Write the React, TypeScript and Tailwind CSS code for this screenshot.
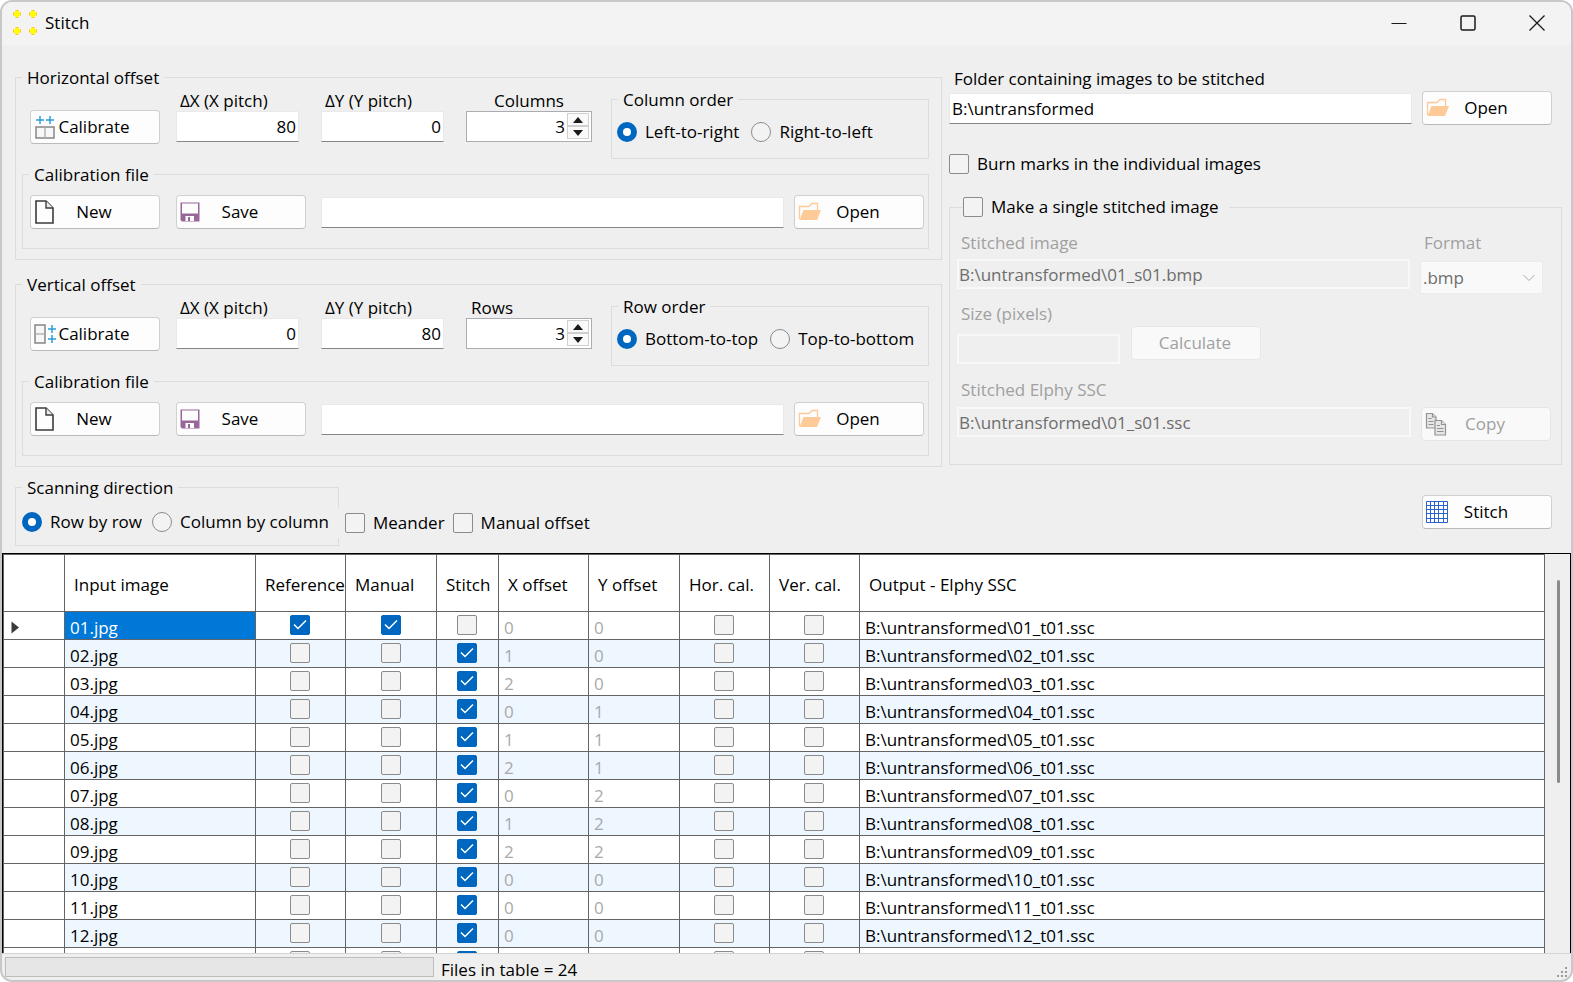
import { useState, type ReactNode } from "react";

type Axis = "horizontal" | "vertical";

interface ImageRow {
  name: string;
  reference: boolean;
  manual: boolean;
  stitch: boolean;
  x: number;
  y: number;
  output: string;
}

const offsets = [
  [0, 0],
  [1, 0],
  [2, 0],
  [0, 1],
  [1, 1],
  [2, 1],
  [0, 2],
  [1, 2],
  [2, 2],
];

const initialRows: ImageRow[] = Array.from({ length: 24 }, (_, i) => {
  const id = String(i + 1).padStart(2, "0");
  const [x, y] = offsets[i] ?? [0, 0];
  return {
    name: `${id}.jpg`,
    reference: i === 0,
    manual: i === 0,
    stitch: i !== 0,
    x,
    y,
    output: `B:\\untransformed\\${id}_t01.ssc`,
  };
});

// full rows that fit in the grid; the one after them is only peeking in
const PAGE_SIZE = 12;

const headers = [
  "",
  "Input image",
  "Reference",
  "Manual",
  "Stitch",
  "X offset",
  "Y offset",
  "Hor. cal.",
  "Ver. cal.",
  "Output - Elphy SSC",
];

/* ---------- icons ---------- */

function AppIcon() {
  return (
    <svg width="26" height="26" viewBox="0 0 26 26" aria-hidden="true">
      {[
        [5, 4],
        [21, 4],
        [5, 21],
        [21, 21],
      ].map(([x, y]) => (
        <g key={`${x}-${y}`}>
          <path d={`M${x - 4} ${y}h8M${x} ${y - 4}v8`} stroke="#ffc61a" strokeWidth="3" />
          <path d={`M${x - 3} ${y}h6M${x} ${y - 3}v6`} stroke="#ffff00" strokeWidth="3" />
        </g>
      ))}
    </svg>
  );
}

function CalibrateIcon({ axis }: { axis: Axis }) {
  if (axis === "horizontal") {
    return (
      <svg width="24" height="26" viewBox="0 0 24 26" fill="none" aria-hidden="true">
        <path d="M2 6h8M6 2v8M12 6h8M16 2v8" stroke="#2a9fd8" strokeWidth="1.5" />
        <rect x="2" y="13" width="18" height="11" fill="#f7f7f7" stroke="#868686" strokeWidth="1.5" />
        <path d="M11 13.5v10" stroke="#b5b5b5" strokeWidth="1.5" />
      </svg>
    );
  }
  return (
    <svg width="24" height="26" viewBox="0 0 24 26" fill="none" aria-hidden="true">
      <rect x="1" y="4" width="10" height="18" fill="#f7f7f7" stroke="#868686" strokeWidth="1.5" />
      <path d="M1.5 13h9" stroke="#b5b5b5" strokeWidth="1.5" />
      <path d="M14 8h8M18 4v8M14 18h8M18 14v8" stroke="#2a9fd8" strokeWidth="1.5" />
    </svg>
  );
}

function NewIcon() {
  return (
    <svg width="22" height="26" viewBox="0 0 22 26" fill="none" aria-hidden="true">
      <path d="M2 2h10l7 7v15H2z" fill="#fdfdfd" stroke="#3b3b3b" strokeWidth="1.6" />
      <path d="M12 2v7h7" fill="#ededed" stroke="#3b3b3b" strokeWidth="1.4" />
    </svg>
  );
}

function SaveIcon() {
  return (
    <svg width="20" height="20" viewBox="0 0 20 20" aria-hidden="true">
      <path d="M.5.5h19v19H2L.5 18z" fill="#996699" />
      <path d="M2 1.500h16v10H2z" fill="#fdfdfd" />
      <path d="M5.500 14h8.500v5H5.500z" fill="#fdfdfd" />
      <path d="M8 15h2v4H8z" fill="#996699" />
    </svg>
  );
}

function FolderIcon() {
  return (
    <svg width="24" height="20" viewBox="0 0 24 20" fill="none" aria-hidden="true">
      <path d="M1.5 17V4.500h9.500l3-3h5.500V8" stroke="#fecb98" strokeWidth="1.3" />
      <path d="M5.500 8h17.500l-4 10H1.500z" fill="#fecb98" />
    </svg>
  );
}

function CopyIcon() {
  return (
    <svg width="22" height="24" viewBox="0 0 22 24" fill="#e6e6e6" stroke="#929292" strokeWidth="1.2" aria-hidden="true">
      <path d="M1.5 1.5h6l3.500 3.500v11H1.500z" />
      <path d="M7.500 1.500V5H11M3.500 6.500h3M3.500 9.500h5M3.500 12.500h5" />
      <path d="M10 8.500h6.500l4 4V23H10z" />
      <path d="M16.500 8.500v4h4M12 13.500h3M12 16.500h6.500M12 19.500h6.500" />
    </svg>
  );
}

function GridIcon() {
  return (
    <svg width="22" height="22" viewBox="0 0 22 22" fill="#ffffff" stroke="#2b62cf" aria-hidden="true">
      <path d="M.5.5h21v21H.500zM4.500.500v21M8.500.500v21M12.500.500v21M17.500.500v21M.500 4.500h21M.500 8.500h21M.500 12.500h21M.500 17.500h21" />
    </svg>
  );
}

/* ---------- controls ---------- */

function Button({
  icon,
  children,
  disabled,
}: {
  icon?: ReactNode;
  children: ReactNode;
  disabled?: boolean;
}) {
  return (
    <button
      type="button"
      disabled={disabled}
      className="grid h-[34px] w-[130px] shrink-0 grid-cols-[1fr_auto_1fr] items-center rounded border border-[#d0d0d0] border-b-[#bababa] bg-[#fdfdfd] pr-[5px] pl-[3px] hover:bg-[#f5faff] disabled:border-[#e6e6e6] disabled:bg-[#f9f9f9] disabled:text-[#a0a0a0]"
    >
      <span className="flex items-center">{icon}</span>
      <span>{children}</span>
    </button>
  );
}

function CheckBox({
  checked,
  onChange,
  id,
  label,
}: {
  checked: boolean;
  onChange: (value: boolean) => void;
  id?: string;
  label?: string;
}) {
  return (
    <span className="inline-grid size-5 shrink-0 align-top">
      <input
        id={id}
        type="checkbox"
        aria-label={label}
        checked={checked}
        onChange={(e) => onChange(e.target.checked)}
        className="col-start-1 row-start-1 size-5 appearance-none rounded-[2px] border border-[#8b8b8b] bg-[#f3f3f3] checked:border-[#0067c0] checked:bg-[#0067c0]"
      />
      {checked && (
        <svg
          viewBox="0 0 20 20"
          fill="none"
          className="pointer-events-none col-start-1 row-start-1 size-5"
          aria-hidden="true"
        >
          <path d="M4 9.500l4 4 8-8" stroke="#ffffff" strokeWidth="1.500" />
        </svg>
      )}
    </span>
  );
}

function LabelledCheck({
  id,
  children,
  className = "",
}: {
  id: string;
  children: ReactNode;
  className?: string;
}) {
  const [checked, setChecked] = useState(false);
  return (
    <label htmlFor={id} className={`flex items-center gap-2 whitespace-nowrap ${className}`}>
      <CheckBox id={id} checked={checked} onChange={setChecked} />
      <span>{children}</span>
    </label>
  );
}

function Radio({ name, children, defaultChecked }: { name: string; children: ReactNode; defaultChecked?: boolean }) {
  return (
    <label className="flex items-center gap-2 whitespace-nowrap">
      <input
        type="radio"
        name={name}
        defaultChecked={defaultChecked}
        className="size-5 shrink-0 appearance-none rounded-full border border-[#8b8b8b] bg-[#f3f3f3] checked:border-[6px] checked:border-[#0067c0] checked:bg-white"
      />
      <span>{children}</span>
    </label>
  );
}

function Group({ title, className = "", children }: { title: ReactNode; className?: string; children: ReactNode }) {
  return (
    <fieldset className={`min-w-0 border border-[#dcdcdc] ${className}`}>
      <legend className="ml-1.5 h-5 px-[5px] leading-[22px]">{title}</legend>
      {children}
    </fieldset>
  );
}

function NumberField({ id, label, value }: { id: string; label: string; value: string }) {
  return (
    <div className="flex flex-col pt-0.5">
      <label htmlFor={id} className="pl-1 leading-5 whitespace-nowrap">
        {label}
      </label>
      <input
        id={id}
        type="text"
        defaultValue={value}
        className="h-[31px] w-[123px] border border-[#e9e9e9] border-b-[#868686] bg-white px-0.5 text-right outline-none"
      />
    </div>
  );
}

function Spinner({ id, label, indent }: { id: string; label: string; indent: string }) {
  const [value, setValue] = useState(3);
  return (
    <div className="flex flex-col pt-0.5">
      <label htmlFor={id} className={`leading-5 ${indent}`}>
        {label}
      </label>
      <div className="flex h-[31px] w-[126px] border border-[#abadb3] bg-white">
        <input
          id={id}
          type="text"
          value={value}
          onChange={(e) => setValue(Number(e.target.value) || 0)}
          className="min-w-0 flex-1 px-0.5 text-right outline-none"
        />
        <div className="flex w-6 flex-col pt-px pr-0.5 pb-0.5">
          <button
            type="button"
            aria-label={`Increase ${label}`}
            onClick={() => setValue(value + 1)}
            className="flex flex-1 items-center justify-center border border-[#d0d0d0] bg-[#fafafa]"
          >
            <svg width="10" height="6" viewBox="0 0 10 6" aria-hidden="true">
              <path d="M5 0l5 6H0z" fill="#1a1a1a" />
            </svg>
          </button>
          <button
            type="button"
            aria-label={`Decrease ${label}`}
            onClick={() => setValue(value - 1)}
            className="flex flex-1 items-center justify-center border border-[#d0d0d0] bg-[#fafafa]"
          >
            <svg width="10" height="6" viewBox="0 0 10 6" aria-hidden="true">
              <path d="M0 0h10L5 6z" fill="#1a1a1a" />
            </svg>
          </button>
        </div>
      </div>
    </div>
  );
}

interface OffsetGroupProps {
  axis: Axis;
  title: string;
  dx: string;
  dy: string;
  countLabel: string;
  countIndent: string;
  orderTitle: string;
  orders: [string, string];
}

function OffsetGroup({ axis, title, dx, dy, countLabel, countIndent, orderTitle, orders }: OffsetGroupProps) {
  return (
    <Group title={title}>
      <div className="pr-3 pb-[10px] pl-1.5">
        <div className="grid grid-cols-[130px_129px_129px_129px_1fr] gap-x-4 pt-0.5 pl-2">
          <div className="pt-[21px]">
            <Button icon={<CalibrateIcon axis={axis} />}>Calibrate</Button>
          </div>
          <NumberField id={`${axis}-dx`} label="ΔX (X pitch)" value={dx} />
          <NumberField id={`${axis}-dy`} label="ΔY (Y pitch)" value={dy} />
          <Spinner id={`${axis}-count`} label={countLabel} indent={countIndent} />
          <Group title={orderTitle} className="h-[70px]">
            <div className="flex gap-3 pt-[11px] pl-[5px]">
              <Radio name={`${axis}-order`} defaultChecked>
                {orders[0]}
              </Radio>
              <Radio name={`${axis}-order`}>{orders[1]}</Radio>
            </div>
          </Group>
        </div>
        <Group title="Calibration file" className="mt-[5px]">
          <div className="grid grid-cols-[130px_129px_1fr] gap-x-4 pt-[11px] pr-1 pb-[19px] pl-[7px]">
            <Button icon={<NewIcon />}>New</Button>
            <Button icon={<SaveIcon />}>Save</Button>
            <div className="flex items-center gap-2.5">
              <input
                type="text"
                aria-label={`${title} calibration file`}
                className="h-[31px] min-w-0 flex-1 border border-[#e9e9e9] border-b-[#868686] bg-white px-1 outline-none"
              />
              <Button icon={<FolderIcon />}>Open</Button>
            </div>
          </div>
        </Group>
      </div>
    </Group>
  );
}

function TitleBar() {
  return (
    <header className="flex h-[43px] shrink-0 items-center bg-[#f3f3f3] pb-0.5 pl-2.5">
      <AppIcon />
      <h1 className="pl-[7px]">Stitch</h1>
      <div className="ml-auto flex h-full">
        <button type="button" aria-label="Minimize" className="flex w-[69px] items-center justify-center">
          <svg width="16" height="16" viewBox="0 0 16 16" fill="none" stroke="#1a1a1a" aria-hidden="true">
            <path d="M.5 8.500h15" />
          </svg>
        </button>
        <button type="button" aria-label="Maximize" className="flex w-[69px] items-center justify-center">
          <svg width="16" height="16" viewBox="0 0 16 16" fill="none" stroke="#1a1a1a" strokeWidth="1.500" aria-hidden="true">
            <rect x="1" y="1" width="14" height="14" rx="1.500" />
          </svg>
        </button>
        <button type="button" aria-label="Close" className="flex w-[69px] items-center justify-center">
          <svg width="16" height="16" viewBox="0 0 16 16" fill="none" stroke="#1a1a1a" strokeWidth="1.300" aria-hidden="true">
            <path d="M.5.5l15 15M15.500.500l-15 15" />
          </svg>
        </button>
      </div>
    </header>
  );
}

function ScanControls() {
  return (
    <div className="mt-2.5 flex items-start">
      <Group title="Scanning direction" className="h-[69px] w-[324px]">
        <div className="flex gap-2.5 pt-[13px] pl-1.5">
          <Radio name="scan" defaultChecked>
            Row by row
          </Radio>
          <Radio name="scan">Column by column</Radio>
        </div>
      </Group>
      {/* the labels are opaque and sit over the group's right edge */}
      <div className="relative mt-[31px] -ml-px flex gap-2 bg-[#efefef]">
        <LabelledCheck id="meander" className="h-[30px] pl-[7px]">
          Meander
        </LabelledCheck>
        <LabelledCheck id="manual-offset">Manual offset</LabelledCheck>
      </div>
    </div>
  );
}

const disabledInput = "border-2 border-[#f8f8f8] bg-[#efefef] text-[#6d6d6d] outline-none";

function OutputPanel() {
  const [single, setSingle] = useState(false);
  return (
    <div className="flex w-[613px] shrink-0 flex-col">
      <label htmlFor="folder" className="pt-0.5 pl-[5px] leading-5">
        Folder containing images to be stitched
      </label>
      <div className="flex items-center gap-2.5 pt-0.5 pr-2.5">
        <input
          id="folder"
          type="text"
          defaultValue="B:\untransformed"
          className="h-[31px] min-w-0 flex-1 border border-[#e9e9e9] border-b-[#868686] bg-white px-0.5 outline-none"
        />
        <Button icon={<FolderIcon />}>Open</Button>
      </div>
      <LabelledCheck id="burn" className="mt-[27px]">
        Burn marks in the individual images
      </LabelledCheck>
      <fieldset className="mt-[21px] h-[268px] min-w-0 border border-[#dcdcdc]">
        <legend className="ml-[13px] flex h-5 items-center gap-2 pr-2.5 leading-5">
          <CheckBox id="single" checked={single} onChange={setSingle} />
          <label htmlFor="single">Make a single stitched image</label>
        </legend>
        <div className="pr-2.5 pl-[7px]">
          <div className="grid grid-cols-[1fr_131px] gap-x-2.5 pt-4 text-[#a0a0a0]">
            <label htmlFor="stitched-image" className="pl-1 leading-5">
              Stitched image
            </label>
            <label htmlFor="format" className="pl-1 leading-5">
              Format
            </label>
            <input
              id="stitched-image"
              type="text"
              disabled
              defaultValue="B:\untransformed\01_s01.bmp"
              className={`mt-1.5 h-[30px] min-w-0 ${disabledInput}`}
            />
            <div className="mt-2 grid w-[123px]">
              <select
                id="format"
                disabled
                className="col-start-1 row-start-1 h-[33px] w-full appearance-none border border-[#ebebeb] bg-[#f9f9f9] px-0.5 text-[#6d6d6d] opacity-100"
              >
                <option>.bmp</option>
              </select>
              <svg
                viewBox="0 0 12 8"
                fill="none"
                stroke="#a8a8a8"
                className="pointer-events-none col-start-1 row-start-1 mr-2 h-2 w-3 self-center justify-self-end"
                aria-hidden="true"
              >
                <path d="M.5 1l5.500 5.500L11.500 1" />
              </svg>
            </div>
          </div>
          <div className="flex items-end gap-[11px] pt-2.5 text-[#a0a0a0]">
            <div className="flex flex-col">
              <label htmlFor="size" className="pl-1 leading-5">
                Size (pixels)
              </label>
              <input id="size" type="text" disabled className={`mt-2.5 h-[30px] w-[163px] ${disabledInput}`} />
            </div>
            <div className="pb-1">
              <Button disabled>Calculate</Button>
            </div>
          </div>
          <div className="pt-4 text-[#a0a0a0]">
            <label htmlFor="ssc" className="block pl-1 leading-5">
              Stitched Elphy SSC
            </label>
            <div className="flex items-start gap-2.5 pt-[7px]">
              <input
                id="ssc"
                type="text"
                disabled
                defaultValue="B:\untransformed\01_s01.ssc"
                className={`h-[30px] min-w-0 flex-1 ${disabledInput}`}
              />
              <Button disabled icon={<CopyIcon />}>
                Copy
              </Button>
            </div>
          </div>
        </div>
      </fieldset>
      <div className="flex justify-end pt-[30px] pr-2.5">
        <Button icon={<GridIcon />}>Stitch</Button>
      </div>
    </div>
  );
}

function ImageTable() {
  const [rows, setRows] = useState(initialRows);
  const [first, setFirst] = useState(0);

  const toggle = (index: number, key: "reference" | "manual" | "stitch", value: boolean) =>
    setRows(rows.map((row, i) => (i === index ? { ...row, [key]: value } : row)));

  const scroll = (delta: number) =>
    setFirst(Math.max(0, Math.min(rows.length - PAGE_SIZE, first + Math.sign(delta))));

  const cell = "border-r border-b border-[#646464]";
  const textCell = `${cell} pt-1 pl-[5px]`;
  const checkCell = `${cell} pt-[3px] pr-px text-center align-top`;

  return (
    <div
      className="flex min-h-0 flex-1 overflow-hidden border border-b-0 border-black bg-[#efefef]"
      onWheel={(e) => scroll(e.deltaY)}
    >
      <div className="min-w-0 flex-1 overflow-hidden border-t border-l border-[#646464]">
        <table className="w-full table-fixed border-separate border-spacing-0 bg-white">
          <colgroup>
            <col className="w-[61px]" />
            <col className="w-[191px]" />
            <col className="w-[90px]" />
            <col className="w-[91px]" />
            <col className="w-[62px]" />
            <col className="w-[90px]" />
            <col className="w-[91px]" />
            <col className="w-[90px]" />
            <col className="w-[90px]" />
            <col />
          </colgroup>
          <thead>
            <tr className="h-[57px]">
              {headers.map((header) => (
                <th
                  key={header}
                  scope="col"
                  className={`${cell} pt-1 pl-[9px] text-left font-normal whitespace-nowrap`}
                >
                  {header}
                </th>
              ))}
            </tr>
          </thead>
          <tbody>
            {rows.slice(first, first + PAGE_SIZE).map((row, offset) => {
              const i = first + offset;
              return (
                <tr key={row.name} className={`h-7 leading-5 ${i % 2 ? "bg-[#eef7ff]" : ""}`}>
                  <td className={`${cell} bg-white pl-1.5`}>
                    {i === 0 && (
                      <svg width="9" height="13" viewBox="0 0 9 13" className="mt-1 ml-px" aria-hidden="true">
                        <path d="M.5.5L8 6.500.500 12.500z" fill="#3b3b3b" />
                      </svg>
                    )}
                  </td>
                  <td className={`${textCell} ${i === 0 ? "bg-[#0078d7] text-white" : ""}`}>{row.name}</td>
                  <td className={checkCell}>
                    <CheckBox
                      label={`${row.name} reference`}
                      checked={row.reference}
                      onChange={(v) => toggle(i, "reference", v)}
                    />
                  </td>
                  <td className={checkCell}>
                    <CheckBox
                      label={`${row.name} manual`}
                      checked={row.manual}
                      onChange={(v) => toggle(i, "manual", v)}
                    />
                  </td>
                  <td className={checkCell}>
                    <CheckBox
                      label={`${row.name} stitch`}
                      checked={row.stitch}
                      onChange={(v) => toggle(i, "stitch", v)}
                    />
                  </td>
                  <td className={`${textCell} text-[#a9a9a9]`}>{row.x}</td>
                  <td className={`${textCell} text-[#a9a9a9]`}>{row.y}</td>
                  <td className={checkCell}>
                    <CheckBox label={`${row.name} horizontal calibration`} checked={false} onChange={() => {}} />
                  </td>
                  <td className={checkCell}>
                    <CheckBox label={`${row.name} vertical calibration`} checked={false} onChange={() => {}} />
                  </td>
                  <td className={textCell}>{row.output}</td>
                </tr>
              );
            })}
            {first + PAGE_SIZE < rows.length && (
              <tr className="h-7">
                {headers.map((header, column) => (
                  <td key={header} className={checkCell}>
                    {[2, 3, 4, 7, 8].includes(column) && (
                      <CheckBox
                        label={`${rows[first + PAGE_SIZE].name} ${header}`}
                        checked={column === 4}
                        onChange={() => scroll(1)}
                      />
                    )}
                  </td>
                ))}
              </tr>
            )}
          </tbody>
        </table>
      </div>
      <div className="flex w-[25px] shrink-0 justify-center pt-[26px] pl-px">
        <div className="h-[203px] w-[3px] rounded-full bg-[#8a8a8a]" />
      </div>
    </div>
  );
}

function StatusBar() {
  return (
    <footer className="flex h-[27px] shrink-0 items-start border-t border-[#d4d4d4] pt-[3px] pl-[3px]">
      <div
        role="progressbar"
        aria-label="Progress"
        aria-valuenow={0}
        className="h-5 w-[429px] border border-[#bcbcbc] bg-[#e6e6e6]"
      />
      <span className="pt-[3px] pl-[7px] leading-5">Files in table = 24</span>
      <svg width="12" height="12" viewBox="0 0 12 12" fill="#9a9a9a" className="mt-2.5 mr-0.5 ml-auto" aria-hidden="true">
        <path d="M8 0h2v2H8zM4 4h2v2H4zM8 4h2v2H8zM0 8h2v2H0zM4 8h2v2H4zM8 8h2v2H8z" />
      </svg>
    </footer>
  );
}

export default function App() {
  return (
    <div className="flex h-screen flex-col overflow-hidden rounded-xl border-2 border-[#c8c8c8] bg-[#efefef] font-['Open_Sans','Noto_Sans',sans-serif] text-[17px] leading-6 text-black">
      <TitleBar />
      <main className="flex min-h-0 flex-1 flex-col">
        <div className="flex gap-[7px] pt-[22px] pr-[9px] pb-[7px] pl-[13px]">
          <div className="min-w-0 flex-1">
            <OffsetGroup
              axis="horizontal"
              title="Horizontal offset"
              dx="80"
              dy="0"
              countLabel="Columns"
              countIndent="pl-7"
              orderTitle="Column order"
              orders={["Left-to-right", "Right-to-left"]}
            />
            <div className="pt-3.5">
              <OffsetGroup
                axis="vertical"
                title="Vertical offset"
                dx="0"
                dy="80"
                countLabel="Rows"
                countIndent="pl-[5px]"
                orderTitle="Row order"
                orders={["Bottom-to-top", "Top-to-bottom"]}
              />
            </div>
            <ScanControls />
          </div>
          <OutputPanel />
        </div>
        <ImageTable />
      </main>
      <StatusBar />
    </div>
  );
}
